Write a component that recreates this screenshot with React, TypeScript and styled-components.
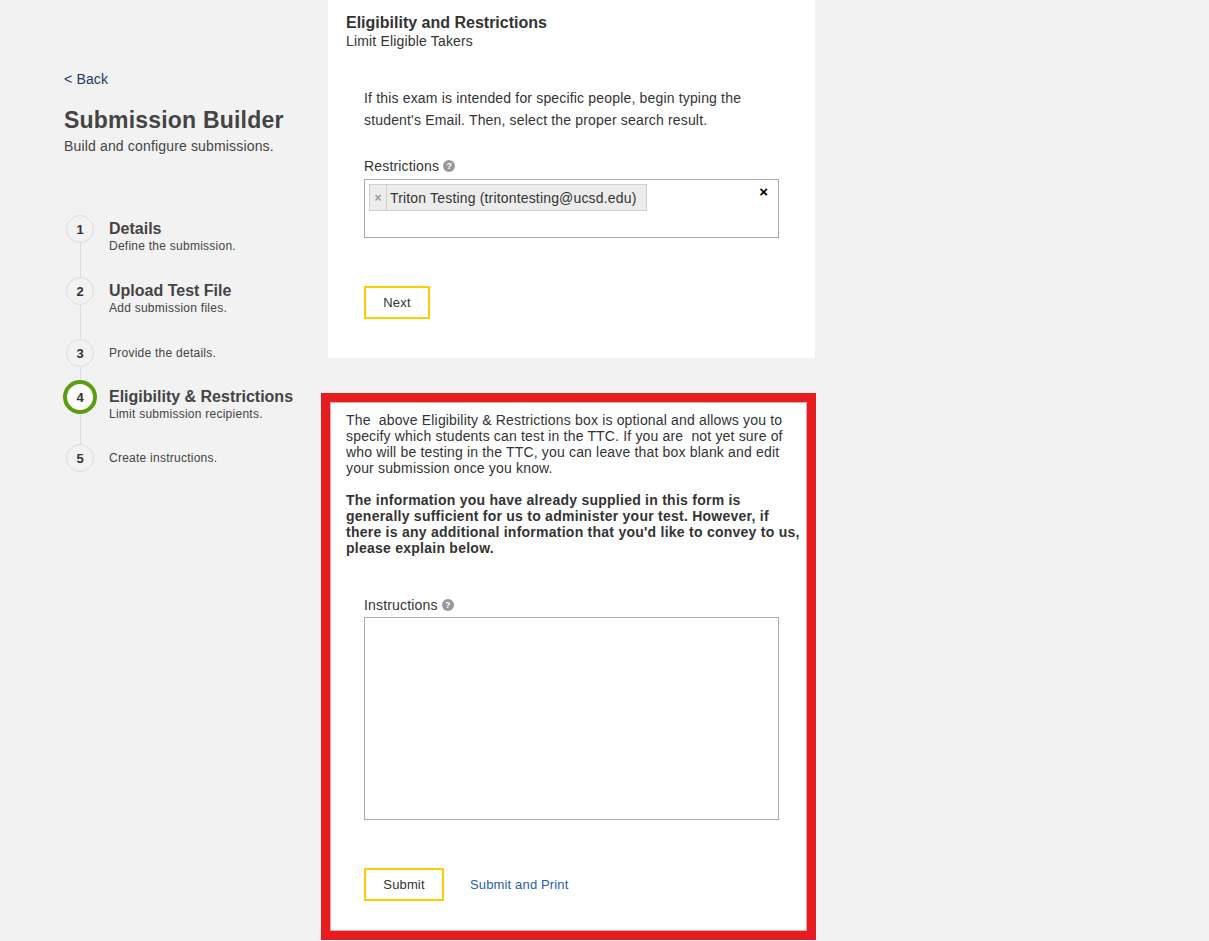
import React from "react";
import styled, { createGlobalStyle } from "styled-components";

const GlobalStyle = createGlobalStyle`
  html, body { margin: 0; padding: 0; background: #f2f2f2; }
  body { font-family: "Liberation Sans", Arial, sans-serif; color: #333; }
  * { box-sizing: border-box; }
`;

const Page = styled.div`
  display: flex;
  align-items: flex-start;
  min-height: 940px;
`;

const Sidebar = styled.aside`
  width: 328px;
  padding: 71px 0 0 64px;
  display: flex;
  flex-direction: column;
`;

const BackLink = styled.a`
  font-size: 14px;
  line-height: 16px;
  letter-spacing: 0.17px;
  color: #1f3a60;
  text-decoration: none;
`;

const BuilderTitle = styled.h1`
  margin: 20px 0 0;
  font-size: 23px;
  line-height: 26px;
  letter-spacing: 0.2px;
  font-weight: bold;
  color: #444;
`;

const BuilderSub = styled.p`
  margin: 5px 0 0;
  font-size: 14px;
  line-height: 16px;
  letter-spacing: 0.16px;
  color: #444;
`;

const Steps = styled.ol`
  list-style: none;
  margin: 61px 0 0 -1px;
  padding: 0;
`;

const Step = styled.li<{ $h: number }>`
  display: flex;
  min-height: ${(p) => p.$h}px;
`;

const Rail = styled.div`
  width: 34px;
  display: flex;
  flex-direction: column;
  align-items: center;
`;

const Circle = styled.span<{ $active?: boolean }>`
  width: ${(p) => (p.$active ? 34 : 28)}px;
  height: ${(p) => (p.$active ? 34 : 28)}px;
  flex: none;
  border-radius: 50%;
  border: ${(p) => (p.$active ? "4px solid #5b9d0f" : "1px solid #dcdcdc")};
  background: ${(p) => (p.$active ? "#fff" : "#f2f2f2")};
  display: flex;
  align-items: center;
  justify-content: center;
  font-size: 13px;
  font-weight: bold;
  color: #333;
`;

const Connector = styled.span`
  flex: 1;
  width: 1px;
  background: #dcdcdc;
`;

const StepText = styled.div<{ $pt: number }>`
  padding: ${(p) => p.$pt}px 0 0 12px;
  display: flex;
  flex-direction: column;
`;

const StepTitle = styled.span`
  font-size: 16px;
  line-height: 20px;
  font-weight: bold;
  color: #444;
`;

const StepSub = styled.span`
  font-size: 12px;
  line-height: 14px;
  letter-spacing: 0.25px;
  color: #444;
`;

const Main = styled.main`
  width: 487px;
  display: flex;
  flex-direction: column;
`;

const TopPanel = styled.section`
  background: #fff;
  height: 358px;
  padding: 14px 18px 0;
`;

const PanelTitle = styled.h2`
  margin: 0;
  font-size: 16px;
  line-height: 18px;
  font-weight: bold;
  color: #333;
`;

const PanelSub = styled.div`
  font-size: 14px;
  line-height: 18px;
  letter-spacing: 0.17px;
  color: #333;
`;

const FormBody = styled.div<{ $mt: number }>`
  padding-left: 18px;
  margin-top: ${(p) => p.$mt}px;
`;

const Intro = styled.p`
  margin: 0;
  width: 415px;
  font-size: 14px;
  line-height: 22px;
  letter-spacing: 0.17px;
  color: #333;
`;

const Label = styled.label<{ $mt: number }>`
  display: flex;
  align-items: center;
  margin-top: ${(p) => p.$mt}px;
  font-size: 14px;
  line-height: 20px;
  letter-spacing: 0.17px;
  color: #333;
`;

const Help = styled.span`
  width: 12px;
  height: 12px;
  margin-left: 4px;
  border-radius: 50%;
  background: #999;
  color: #fff;
  font-size: 9px;
  font-weight: bold;
  line-height: 12px;
  letter-spacing: 0;
  text-align: center;
`;

const TagBox = styled.div`
  margin-top: 3px;
  width: 415px;
  height: 59px;
  border: 1px solid #aaa;
  padding: 4px 10px 0 4px;
  display: flex;
  align-items: flex-start;
  justify-content: space-between;
  background: #fff;
`;

const Chip = styled.span`
  display: flex;
  align-items: stretch;
  height: 27px;
  border: 1px solid #d0d0d0;
  background: #ececec;
  font-size: 14px;
  letter-spacing: 0.17px;
  color: #333;
`;

const ChipRemove = styled.span`
  width: 17px;
  border-right: 1px solid #d0d0d0;
  color: #999;
  font-size: 12px;
  font-weight: bold;
  display: flex;
  align-items: center;
  justify-content: center;
`;

const ChipText = styled.span`
  display: flex;
  align-items: center;
  padding: 0 9px 0 3px;
`;

const ClearAll = styled.span`
  margin-top: 1px;
  font-size: 15px;
  font-weight: bold;
  color: #000;
  line-height: 14px;
`;

const YellowButton = styled.button<{ $w: number; $mt: number }>`
  display: block;
  margin-top: ${(p) => p.$mt}px;
  width: ${(p) => p.$w}px;
  height: 33px;
  border: 2px solid #ffcc00;
  background: #fff;
  font-family: inherit;
  font-size: 13px;
  letter-spacing: 0.15px;
  color: #333;
  padding: 0;
`;

const Highlight = styled.section`
  margin: 35px 0 0 -7px;
  width: 495px;
  border: 9px solid #e51c20;
  background: #fff;
  box-shadow: inset 0 0 0 1px #f5a3a5;
  padding: 10px 2px 30px 16px;
`;

const Note = styled.p<{ $bold?: boolean }>`
  margin: ${(p) => (p.$bold ? "16px 0 0" : "0")};
  font-size: 14px;
  line-height: 16px;
  letter-spacing: ${(p) => (p.$bold ? "0.25px" : "0.17px")};
  font-weight: ${(p) => (p.$bold ? "bold" : "normal")};
  color: #333;
`;

const TextArea = styled.textarea`
  display: block;
  margin-top: 2px;
  width: 415px;
  height: 203px;
  border: 1px solid #aaa;
  resize: none;
  font-family: inherit;
`;

const Actions = styled.div`
  display: flex;
  align-items: center;
  gap: 26px;
  margin-top: 48px;
`;

const PrintLink = styled.a`
  font-size: 13px;
  letter-spacing: 0.15px;
  color: #1f5fa8;
  text-decoration: none;
`;

const steps = [
  { n: 1, title: "Details", sub: "Define the submission.", h: 62 },
  { n: 2, title: "Upload Test File", sub: "Add submission files.", h: 62 },
  { n: 3, title: "", sub: "Provide the details.", h: 41 },
  { n: 4, title: "Eligibility & Restrictions", sub: "Limit submission recipients.", h: 64, active: true },
  { n: 5, title: "", sub: "Create instructions.", h: 28 },
];

export default function App() {
  return (
    <>
      <GlobalStyle />
      <Page>
        <Sidebar>
          <BackLink href="#">&lt; Back</BackLink>
          <BuilderTitle>Submission Builder</BuilderTitle>
          <BuilderSub>Build and configure submissions.</BuilderSub>
          <Steps>
            {steps.map((s, i) => {
              const size = s.active ? 34 : 28;
              const first = s.title ? 20 : 14;
              return (
                <Step key={s.n} $h={s.h}>
                  <Rail>
                    <Circle $active={s.active}>{s.n}</Circle>
                    {i < steps.length - 1 && <Connector />}
                  </Rail>
                  <StepText $pt={(size - first) / 2}>
                    {s.title && <StepTitle>{s.title}</StepTitle>}
                    <StepSub>{s.sub}</StepSub>
                  </StepText>
                </Step>
              );
            })}
          </Steps>
        </Sidebar>
        <Main>
          <TopPanel>
            <PanelTitle>Eligibility and Restrictions</PanelTitle>
            <PanelSub>Limit Eligible Takers</PanelSub>
            <FormBody $mt={37}>
              <Intro>
                If this exam is intended for specific people, begin typing the student's Email. Then, select the
                proper search result.
              </Intro>
              <Label $mt={25}>
                Restrictions<Help>?</Help>
              </Label>
              <TagBox>
                <Chip>
                  <ChipRemove>×</ChipRemove>
                  <ChipText>Triton Testing (tritontesting@ucsd.edu)</ChipText>
                </Chip>
                <ClearAll>×</ClearAll>
              </TagBox>
              <YellowButton $w={66} $mt={48}>Next</YellowButton>
            </FormBody>
          </TopPanel>
          <Highlight>
            <Note>
              The&nbsp; above Eligibility &amp; Restrictions box is optional and allows you to specify which students
              can test in the TTC. If you are&nbsp; not yet sure of who will be testing in the TTC, you can leave that
              box blank and edit your submission once you know.
            </Note>
            <Note $bold>
              The information you have already supplied in this form is generally sufficient for us to administer your
              test. However, if there is any additional information that you'd like to convey to us, please explain
              below.
            </Note>
            <FormBody $mt={0}>
              <Label $mt={39}>
                Instructions<Help>?</Help>
              </Label>
              <TextArea />
              <Actions>
                <YellowButton $w={80} $mt={0}>Submit</YellowButton>
                <PrintLink href="#">Submit and Print</PrintLink>
              </Actions>
            </FormBody>
          </Highlight>
        </Main>
      </Page>
    </>
  );
}
